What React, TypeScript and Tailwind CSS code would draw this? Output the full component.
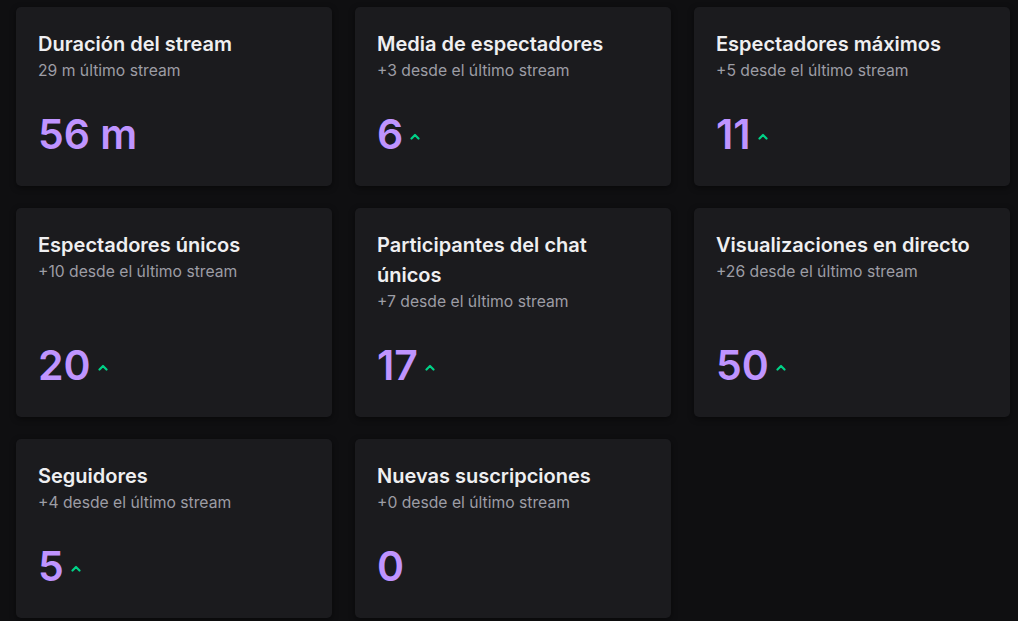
const stats = [
  { title: "Duración del stream", sub: "29 m último stream", value: "56 m", up: false },
  { title: "Media de espectadores", sub: "+3 desde el último stream", value: "6", up: true },
  { title: "Espectadores máximos", sub: "+5 desde el último stream", value: "11", up: true },
  { title: "Espectadores únicos", sub: "+10 desde el último stream", value: "20", up: true },
  { title: "Participantes del chat únicos", sub: "+7 desde el último stream", value: "17", up: true },
  { title: "Visualizaciones en directo", sub: "+26 desde el último stream", value: "50", up: true },
  { title: "Seguidores", sub: "+4 desde el último stream", value: "5", up: true },
  { title: "Nuevas suscripciones", sub: "+0 desde el último stream", value: "0", up: false },
];

function UpArrow() {
  return (
    <svg width="10" height="7" viewBox="0 0 10 7" className="ml-[7px] mt-[4px]">
      <path d="M1.5 5.5 L5 2 L8.5 5.5" fill="none" stroke="#00d287" strokeWidth="2.2" strokeLinecap="round" strokeLinejoin="round" />
    </svg>
  );
}

function StatCard({ title, sub, value, up }: { title: string; sub: string; value: string; up: boolean }) {
  return (
    <div className="flex flex-col rounded-[5px] bg-[#1b1b1e] px-[22px] pt-[22px] pb-[28px] shadow-[0_2px_6px_rgba(0,0,0,0.45)]">
      <h3 className="text-[20px] leading-[30px] font-semibold text-[#efeff1]">{title}</h3>
      <p className="text-[15.7px] leading-[24px] text-[#9d9da5]">{sub}</p>
      <div className="mt-auto flex items-center pt-[27px]">
        <span className="text-[41px] leading-[48px] font-semibold text-[#bf94ff]">{value}</span>
        {up && <UpArrow />}
      </div>
    </div>
  );
}

export default function App() {
  return (
    <div
      className="min-h-[621px] w-full bg-[#0f0f11] pt-[7px] pl-[16px] pr-[8px] pb-[4px]"
      style={{ fontFamily: "Inter, 'Liberation Sans', sans-serif" }}
    >
      <div className="grid grid-cols-3 gap-x-[23px] gap-y-[22px]">
        {stats.map((s) => (
          <StatCard key={s.title} {...s} />
        ))}
      </div>
    </div>
  );
}
